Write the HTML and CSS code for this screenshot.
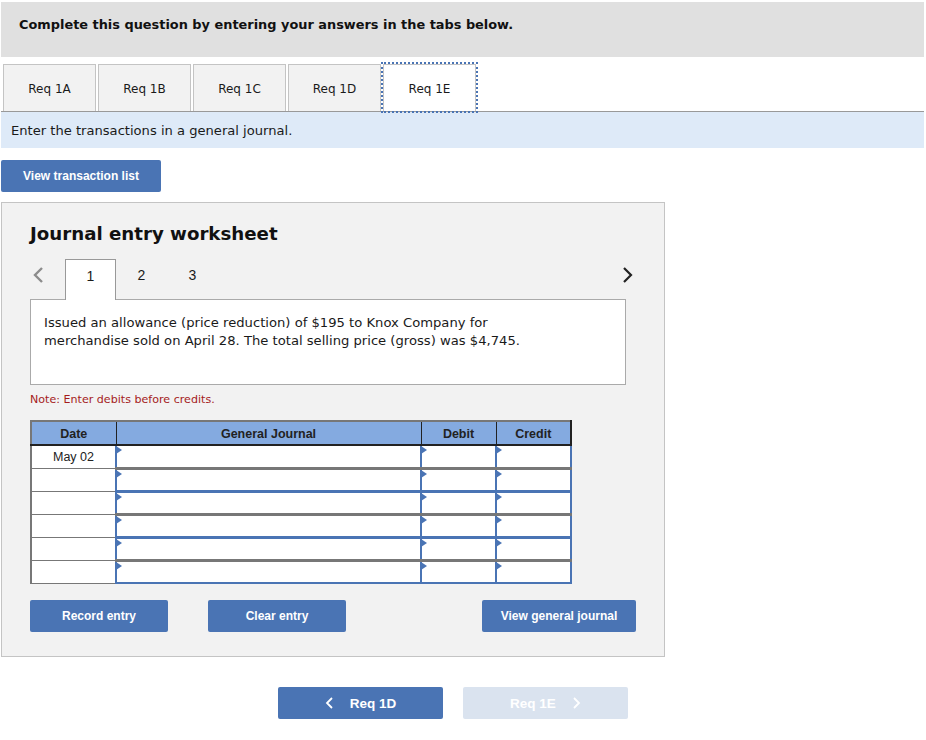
FILE: index.html
```html
<!DOCTYPE html>
<html lang="en">
<head>
    <meta charset="UTF-8">
    <title>Journal entry worksheet</title>
    <link rel="stylesheet" href="styles.css">
</head>
<body>
    <div class="header">Complete this question by entering your answers in the tabs below.</div>

    <div class="tabs">
        <div class="tab">Req 1A</div>
        <div class="tab">Req 1B</div>
        <div class="tab">Req 1C</div>
        <div class="tab">Req 1D</div>
        <div class="tab tab-active">Req 1E</div>
    </div>

    <div class="instruction">Enter the transactions in a general journal.</div>

    <button class="btn btn-list">View transaction list</button>

    <div class="worksheet">
        <h2>Journal entry worksheet</h2>

        <div class="pager">
            <svg class="chevron" width="12" height="18" viewBox="0 0 12 18"><path d="M10 2 L3 9 L10 16" fill="none" stroke="#8c8c8c" stroke-width="2.4"/></svg>
            <div class="page page-active">1</div>
            <div class="page">2</div>
            <div class="page">3</div>
            <svg class="chevron chevron-next" width="12" height="18" viewBox="0 0 12 18"><path d="M2 2 L9 9 L2 16" fill="none" stroke="#222" stroke-width="2.2"/></svg>
        </div>

        <div class="description">Issued an allowance (price reduction) of $195 to Knox Company for merchandise sold on April 28. The total selling price (gross) was $4,745.</div>

        <div class="note">Note: Enter debits before credits.</div>

        <table class="journal">
            <thead>
                <tr><th class="col-date">Date</th><th class="col-account">General Journal</th><th class="col-debit">Debit</th><th class="col-credit">Credit</th></tr>
            </thead>
            <tbody>
                <tr><td class="date">May 02</td><td class="entry"></td><td class="entry"></td><td class="entry"></td></tr>
                <tr><td class="date"></td><td class="entry"></td><td class="entry"></td><td class="entry"></td></tr>
                <tr><td class="date"></td><td class="entry"></td><td class="entry"></td><td class="entry"></td></tr>
                <tr><td class="date"></td><td class="entry"></td><td class="entry"></td><td class="entry"></td></tr>
                <tr><td class="date"></td><td class="entry"></td><td class="entry"></td><td class="entry"></td></tr>
                <tr><td class="date"></td><td class="entry"></td><td class="entry"></td><td class="entry"></td></tr>
            </tbody>
        </table>

        <div class="actions">
            <button class="btn btn-action">Record entry</button>
            <button class="btn btn-action btn-clear">Clear entry</button>
            <button class="btn btn-journal">View general journal</button>
        </div>
    </div>

    <div class="req-nav">
        <button class="btn btn-req">
            <svg width="9" height="14" viewBox="0 0 9 14"><path d="M7 2 L2 7 L7 12" fill="none" stroke="#fff" stroke-width="1.8"/></svg>
            Req 1D
        </button>
        <button class="btn btn-req btn-disabled">
            Req 1E
            <svg width="9" height="14" viewBox="0 0 9 14"><path d="M2 2 L7 7 L2 12" fill="none" stroke="#fff" stroke-width="1.8"/></svg>
        </button>
    </div>
</body>
</html>
```

FILE: styles.css
```css
body {
    margin: 0;
    padding: 2px 0 0 1px;
    background: white;
    font-family: "DejaVu Sans", Verdana, sans-serif;
    color: #1a1a1a;
    width: 923px;
}
.header {
    background: #e0e0e0;
    height: 55px;
    box-sizing: border-box;
    padding: 14px 18px;
    font-size: 12.9px;
    line-height: 18px;
    font-weight: bold;
    color: #111;
}
.tabs {
    display: flex;
    gap: 2px;
    height: 47px;
    margin-top: 7px;
    padding-left: 2px;
    border-bottom: 1px solid #999;
}
.tab {
    width: 93px;
    height: 47px;
    box-sizing: border-box;
    padding-top: 1px;
    background: #f2f2f2;
    border: 1px solid #c4c4c4;
    border-bottom: none;
    display: flex;
    align-items: center;
    justify-content: center;
    font-size: 12px;
}
.tab-active {
    background: white;
    outline: 2px dotted #4a74b4;
}
.instruction {
    background: #deeaf8;
    height: 36px;
    box-sizing: border-box;
    padding: 10px;
    font-size: 13.1px;
    line-height: 17px;
}
.btn {
    background: #4a74b4;
    color: white;
    border: none;
    border-radius: 2px;
    height: 32px;
    padding: 0;
    font-family: "Liberation Sans", Arial, sans-serif;
    font-size: 12px;
    font-weight: bold;
}
.btn-list {
    display: block;
    width: 160px;
    margin-top: 12px;
}
.worksheet {
    width: 664px;
    height: 455px;
    box-sizing: border-box;
    margin-top: 10px;
    padding: 0 28px;
    background: #f2f2f2;
    border: 1px solid #c4c4c4;
}
h2 {
    margin: 19px 0 0;
    font-size: 18.2px;
    line-height: 24px;
    font-weight: bold;
    color: #111;
}
.pager {
    display: flex;
    align-items: center;
    height: 40px;
    margin-top: 13px;
    position: relative;
    font-family: "Liberation Sans", Arial, sans-serif;
    font-size: 14px;
}
.chevron {
    margin: 0 0 8px 2px;
}
.chevron-next {
    margin: 0 2px 9px auto;
}
.page {
    width: 51px;
    height: 41px;
    box-sizing: border-box;
    padding-top: 8px;
    text-align: center;
    line-height: 16px;
}
.page-active {
    margin-left: 21px;
    position: relative;
    z-index: 1;
    background: white;
    border: 1px solid #999;
    border-bottom: none;
}
.description {
    width: 596px;
    height: 86px;
    box-sizing: border-box;
    padding: 14px 60px 14px 13px;
    background: white;
    border: 1px solid #aaa;
    font-size: 13.15px;
    line-height: 18px;
}
.note {
    margin-top: 8px;
    font-size: 11.1px;
    line-height: 14px;
    color: #a51c1c;
}
.journal {
    margin-top: 13px;
    border-collapse: collapse;
    table-layout: fixed;
    width: 540px;
    font-family: "Liberation Sans", Arial, sans-serif;
    font-size: 12.5px;
}
.journal th {
    height: 24px;
    box-sizing: border-box;
    padding: 1px 0 0;
    background: #84aae0;
    color: #222;
    border: 2px solid #777;
    border-bottom-color: #222;
    border-left: 1px solid #222;
    border-right: 1px solid #222;
}
.journal th.col-date { border-left: 2px solid #777; }
.journal th.col-credit { border-right: 2px solid #222; }
.col-date { width: 85px; }
.col-account { width: 305px; }
.col-debit { width: 75px; }
.col-credit { width: 75px; }
.journal td {
    height: 23px;
    box-sizing: border-box;
    padding: 0;
    background: white;
}
.journal .date {
    padding-top: 1px;
    text-align: center;
    border: 1px solid #777;
    border-left-width: 2px;
    color: #222;
}
.journal .entry {
    position: relative;
    border: 2px solid #4a74b4;
    border-bottom: 3px solid #777;
}
.journal tr:nth-child(even) .entry { border-top: 3px solid #777; border-bottom: 3px solid #4a74b4; }
.journal tr:first-child .entry { border-top-width: 2px; border-bottom-width: 2px; }
.journal tr:last-child .entry { border-bottom-width: 2px; }
.journal .entry::before {
    content: "";
    position: absolute;
    left: -1px;
    top: 0;
    border-left: 6px solid #4a74b4;
    border-top: 4px solid transparent;
    border-bottom: 4px solid transparent;
}
.actions {
    display: flex;
    margin-top: 16px;
    width: 606px;
}
.btn-action {
    width: 138px;
}
.btn-clear {
    margin-left: 40px;
}
.btn-journal {
    width: 154px;
    margin-left: auto;
}
.req-nav {
    display: flex;
    gap: 20px;
    margin: 30px 0 0 277px;
}
.btn-req {
    display: flex;
    align-items: center;
    justify-content: center;
    gap: 16px;
    width: 165px;
    font-size: 13.5px;
}
.btn-disabled {
    background: #dae3ef;
}
```
